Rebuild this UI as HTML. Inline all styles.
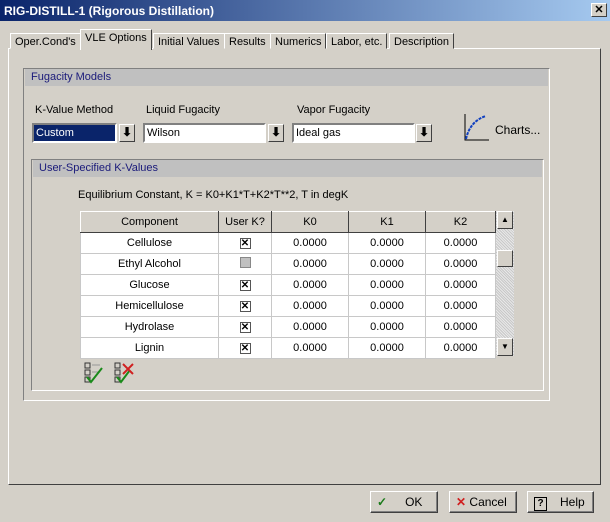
<!DOCTYPE html>
<html><head><style>
*{box-sizing:border-box;margin:0;padding:0}
body{width:610px;height:522px;background:#d4d0c8;font-family:"Liberation Sans",sans-serif;font-size:11px;color:#000;position:relative;overflow:hidden}
.a{position:absolute}
.title{left:0;top:0;width:610px;height:21px;background:linear-gradient(90deg,#0a246a,#a6caf0);color:#fff;font-weight:bold;font-size:12px;padding:4px 4px}
.xb{right:3px;top:3px;width:16px;height:14px;background:#d4d0c8;border:1px solid;border-color:#fff #404040 #404040 #fff;font-size:11px;text-align:center;line-height:12px;font-weight:bold;color:#000}
.tab{top:31px;height:18px;border:1px solid;border-color:#fff #404040 transparent #fff;padding:2px 4px;font-size:11px;background:#d4d0c8}
.panel{left:8px;top:48px;width:593px;height:437px;border:1px solid;border-color:#fff #404040 #404040 #fff}
.grp{border:1px solid;border-color:#808080 #fff #fff #808080}
.band{background:#c0c0c0;color:#1a1a7a;padding:2px 6px;height:17px}
.combo{height:20px;background:#fff;border:2px solid;border-color:#808080 #fff #fff #808080;padding:2px 2px}
.dd{width:16px;height:18px;background:#d4d0c8;border:1px solid;border-color:#fff #404040 #404040 #fff;text-align:center;font-size:12px;font-weight:bold;line-height:15px}
table{border-collapse:collapse;position:absolute;left:80px;top:211px;width:416px;background:#fff}
td{border:1px solid #c8c8c8;height:21px;text-align:center;font-size:11px}
th{height:21px;font-weight:normal;background:#d4d0c8;border:1px solid #404040;border-color:#fff #404040 #404040 #fff;font-size:11px}
.cb{display:inline-block;width:11px;height:11px;border:1px solid #555;font-size:10px;line-height:9px;font-weight:bold;background:#fff}
.btn{top:491px;height:22px;border:1px solid;border-color:#fff #404040 #404040 #fff;box-shadow:inset -1px -1px #808080;font-size:12px;padding:3px 6px}
</style></head><body>
<div class="a title">RIG-DISTILL-1 (Rigorous Distillation)</div>
<div class="a xb">✕</div>
<div class="a panel"></div>
<div class="a tab" style="left:10px;top:33px;height:16px">Oper.Cond's</div>
<div class="a tab" style="left:80px;top:29px;height:21px;border-bottom:none;z-index:2">VLE Options</div>
<div class="a tab" style="left:153px;top:33px;height:16px">Initial Values</div>
<div class="a tab" style="left:224px;top:33px;height:16px">Results</div>
<div class="a tab" style="left:270px;top:33px;height:16px">Numerics</div>
<div class="a tab" style="left:326px;top:33px;height:16px">Labor, etc.</div>
<div class="a tab" style="left:389px;top:33px;height:16px">Description</div>

<div class="a grp" style="left:23px;top:68px;width:527px;height:333px"></div>
<div class="a band" style="left:25px;top:69px;width:523px">Fugacity Models</div>
<div class="a" style="left:35px;top:104px">K-Value Method</div>
<div class="a" style="left:146px;top:104px">Liquid Fugacity</div>
<div class="a" style="left:297px;top:104px">Vapor Fugacity</div>
<div class="a combo" style="left:32px;top:123px;width:85px;background:#0a246a;color:#fff">Custom</div>
<div class="a dd" style="left:119px;top:124px">⬇</div>
<div class="a combo" style="left:143px;top:123px;width:123px">Wilson</div>
<div class="a dd" style="left:268px;top:124px">⬇</div>
<div class="a combo" style="left:292px;top:123px;width:123px">Ideal gas</div>
<div class="a dd" style="left:416px;top:124px">⬇</div>
<svg class="a" style="left:462px;top:113px" width="28" height="30"><path d="M3 1V27H27" stroke="#000" fill="none"/><path d="M4 26Q8 8 24 3" stroke="#1040c0" stroke-width="2" fill="none" stroke-dasharray="3 1"/></svg>
<div class="a" style="left:495px;top:123px;font-size:12px">Charts...</div>

<div class="a grp" style="left:31px;top:159px;width:513px;height:232px"></div>
<div class="a band" style="left:33px;top:160px;width:509px">User-Specified K-Values</div>
<div class="a" style="left:78px;top:189px">Equilibrium Constant, K = K0+K1*T+K2*T**2, T in degK</div>
<table>
<tr><th style="width:138px">Component</th><th style="width:53px">User K?</th><th style="width:77px">K0</th><th style="width:77px">K1</th><th>K2</th></tr>
<tr><td>Cellulose</td><td><span class="cb">✕</span></td><td>0.0000</td><td>0.0000</td><td>0.0000</td></tr>
<tr><td>Ethyl Alcohol</td><td><span class="cb" style="background:#c0c0c0;border-color:#888"></span></td><td>0.0000</td><td>0.0000</td><td>0.0000</td></tr>
<tr><td>Glucose</td><td><span class="cb">✕</span></td><td>0.0000</td><td>0.0000</td><td>0.0000</td></tr>
<tr><td>Hemicellulose</td><td><span class="cb">✕</span></td><td>0.0000</td><td>0.0000</td><td>0.0000</td></tr>
<tr><td>Hydrolase</td><td><span class="cb">✕</span></td><td>0.0000</td><td>0.0000</td><td>0.0000</td></tr>
<tr><td>Lignin</td><td><span class="cb">✕</span></td><td>0.0000</td><td>0.0000</td><td>0.0000</td></tr>
</table>
<div class="a" style="left:496px;top:211px;width:18px;height:145px;background:repeating-linear-gradient(45deg,#e8e8e8 0 1px,#c8c8c8 1px 2px)"></div>
<div class="a dd" style="left:497px;top:211px;font-size:8px;line-height:15px">▲</div>
<div class="a dd" style="left:497px;top:250px;height:17px"></div>
<div class="a dd" style="left:497px;top:338px;font-size:8px;line-height:15px">▼</div>
<svg class="a" style="left:84px;top:362px" width="22" height="22"><rect x="1" y="1" width="5" height="5" fill="none" stroke="#333"/><rect x="1" y="8" width="5" height="5" fill="none" stroke="#333"/><rect x="1" y="15" width="5" height="5" fill="none" stroke="#333"/><path d="M8 3h8M8 10h8" stroke="#999"/><path d="M3 15l4 5 11-14" stroke="#1a8a1a" stroke-width="2" fill="none"/></svg>
<svg class="a" style="left:114px;top:362px" width="22" height="22"><rect x="1" y="1" width="5" height="5" fill="none" stroke="#333"/><rect x="1" y="8" width="5" height="5" fill="none" stroke="#333"/><rect x="1" y="15" width="5" height="5" fill="none" stroke="#333"/><path d="M3 15l4 5 9-12" stroke="#1a8a1a" stroke-width="2" fill="none"/><path d="M9 2l10 10M19 2L9 12" stroke="#d02020" stroke-width="2"/></svg>

<div class="a btn" style="left:370px;width:68px"><span style="color:#1a7a1a;font-weight:bold">✓</span><span style="margin-left:18px">OK</span></div>
<div class="a btn" style="left:449px;width:68px"><span style="color:#d02020;font-weight:bold">✕</span> Cancel</div>
<div class="a btn" style="left:527px;width:67px"><span style="display:inline-block;width:13px;height:14px;border:1px solid #000;text-align:center;font-size:10px;font-weight:bold;line-height:12px">?</span><span style="margin-left:13px">Help</span></div>
</body></html>
